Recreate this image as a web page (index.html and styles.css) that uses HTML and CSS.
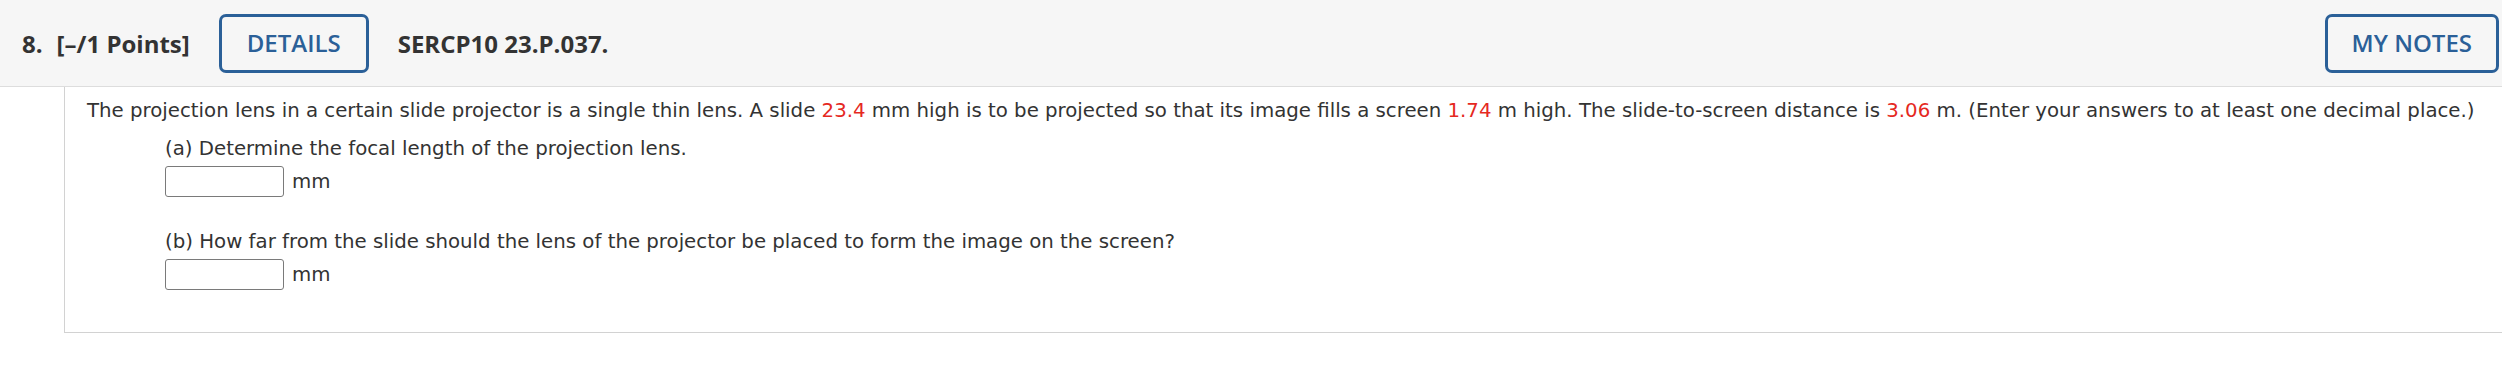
FILE: index.html
```html
<!DOCTYPE html>
<html>
<head>
<meta charset="utf-8">
<link rel="stylesheet" href="styles.css">
</head>
<body>
<div class="header">
  <span class="qnum">8.</span>
  <span class="points">[–/1 Points]</span>
  <button class="btn details">DETAILS</button>
  <span class="code">SERCP10 23.P.037.</span>
  <span class="spacer"></span>
  <button class="btn notes">MY NOTES</button>
</div>
<div class="content">
  <p class="intro">The projection lens in a certain slide projector is a single thin lens. A slide <span class="red">23.4</span> mm high is to be projected so that its image fills a screen <span class="red">1.74</span> m high. The slide-to-screen distance is <span class="red">3.06</span> m. (Enter your answers to at least one decimal place.)</p>
  <div class="part part-a">
    <p class="ptext">(a) Determine the focal length of the projection lens.</p>
    <div class="answer"><span class="box"></span><span class="unit">mm</span></div>
  </div>
  <div class="part part-b">
    <p class="ptext">(b) How far from the slide should the lens of the projector be placed to form the image on the screen?</p>
    <div class="answer"><span class="box"></span><span class="unit">mm</span></div>
  </div>
</div>
</body>
</html>
```
FILE: styles.css
```css
html, body {
  margin: 0;
  padding: 0;
  background: #ffffff;
}
.header {
  display: flex;
  align-items: center;
  height: 86px;
  background: #f6f6f6;
  border-bottom: 1px solid #dddddd;
  padding: 0 3px 0 22px;
  font-family: "Open Sans", "Liberation Sans", sans-serif;
  font-size: 24px;
  color: #333333;
}
.qnum {
  font-weight: 700;
  margin-right: 14px;
}
.points {
  font-weight: 700;
  margin-right: 29px;
}
.btn {
  font-family: "Open Sans", "Liberation Sans", sans-serif;
  font-size: 24px;
  font-weight: 600;
  color: #2b6098;
  background: transparent;
  border: 3px solid #2b6098;
  border-radius: 7px;
  height: 59px;
  padding: 0 25px;
  line-height: 1;
}
.details {
  margin-right: 29px;
}
.notes {
  padding: 0 24px;
}
.code {
  font-weight: 700;
}
.spacer {
  flex: 1;
}
.content {
  margin-left: 64px;
  border-left: 1px solid #d2d2d2;
  border-bottom: 1px solid #d2d2d2;
  padding: 9px 0 42px 22px;
  font-family: "DejaVu Sans", Verdana, sans-serif;
  font-size: 19.75px;
  line-height: 30px;
  color: #333333;
}
.content p {
  margin: 0;
}
.red {
  color: #e5291f;
}
.part {
  padding-left: 78px;
}
.part-a {
  margin-top: 8px;
}
.part-b {
  margin-top: 30px;
}
.answer {
  display: flex;
  align-items: center;
  margin-top: 2px;
}
.box {
  display: block;
  width: 117px;
  height: 29px;
  border: 1px solid #7a7a7a;
  border-radius: 3px;
  background: #ffffff;
}
.unit {
  margin-left: 8px;
}
```
